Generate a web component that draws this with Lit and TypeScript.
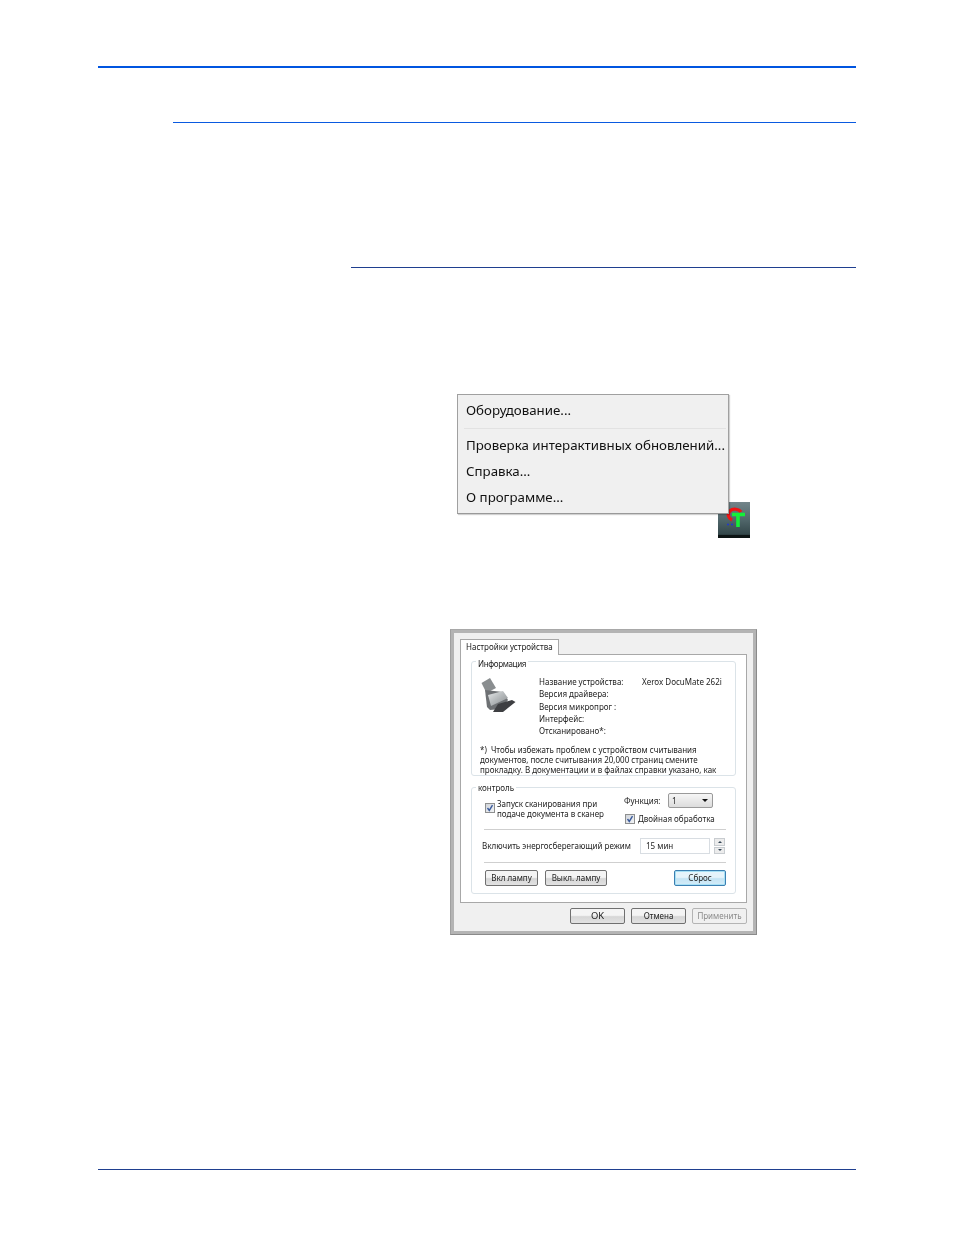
import { LitElement, html, css } from "lit";
import { customElement } from "lit/decorators.js";

@customElement("app-root")
export class AppRoot extends LitElement {
  static styles = css`
    :host { display: block; width: 954px; height: 1235px; background: #fff; overflow: hidden; font-family: "Noto Sans", sans-serif; }
    .page { display: flex; flex-direction: column; padding-top: 66px; box-sizing: border-box; height: 1235px; }
    .r1 { margin-left: 98px; width: 758px; height: 2px; background: #0055e0; }
    .r2 { margin: 54px 0 0 173px; width: 683px; height: 1px; background: #0a5ae0; }
    .r3 { margin: 144px 0 0 351px; width: 505px; height: 1px; background: #1f3f8f; }
    .r4 { margin: 234px 0 0 98px; width: 758px; height: 1px; background: #1f3f8f; }

    .menuwrap { position: relative; margin: 126px 0 0 457px; width: 293px; height: 144px; }
    .tray { position: absolute; left: 261px; top: 108px; width: 32px; height: 36px; display: block; }
    .menu { position: relative; box-sizing: border-box; width: 272px; height: 120px; background: #f0f0f0; border: 1px solid #a0a0a0; border-bottom-color: #999; box-shadow: 1px 1px 1px rgba(0,0,0,.18); display: flex; flex-direction: column; padding: 2px 0 0 8px; color: #111; font-size: 13.3px; filter: blur(.35px); }
    .mi { height: 26px; line-height: 26px; white-space: nowrap; }
    .msep { height: 1px; background: #e2e2e2; margin: 5px 2px 3px -2px; }

    .dlg { box-sizing: border-box; margin: 91px 0 0 450px; width: 307px; height: 306px; background: #f0f0f0; border: 1px solid #8a8a8a; border-top-color: #a8a8a8; border-left-color: #a0a0a0; box-shadow: inset 0 0 0 3px #b4b4b4; padding: 9px 9px 0 9px; display: flex; flex-direction: column; font-size: 8px; line-height: 10px; color: #222; filter: blur(.35px); }
    .tab { box-sizing: border-box; width: 99px; height: 16px; background: #fff; border: 1px solid #a8a8a8; border-bottom: 0; padding: 2px 0 0 5px; white-space: nowrap; margin-bottom: -1px; position: relative; z-index: 1; }
    .panel { box-sizing: border-box; height: 249px; background: #fff; border: 1px solid #a8a8a8; padding: 6px 10px 0 10px; display: flex; flex-direction: column; }
    .group { box-sizing: border-box; border: 1px solid #dbe3e8; border-radius: 3px; position: relative; }
    .legend { position: absolute; left: 4px; top: -5px; background: #fff; padding: 0 2px; height: 9px; line-height: 9px; }
    .info { height: 115px; padding: 15px 0 0 8px; flex: none; }
    .info .legend { top: -3px; letter-spacing: -.35px; }
    .inforow { display: flex; }
    .scan { width: 37px; height: 36px; margin: 0 22px 0 1px; flex: none; }
    .labels { width: 103px; flex: none; display: grid; grid-auto-rows: 12.25px; white-space: nowrap; margin-left: -1px; }
    .val { white-space: nowrap; }
    .note { margin: 7px 0 0 0; white-space: nowrap; }
    .ctrl { margin-top: 11px; height: 107px; padding: 5px 10px 0 10px; flex: none; }
    .top { display: flex; height: 36px; }
    .ck { box-sizing: border-box; width: 10px; height: 10px; background: linear-gradient(135deg,#d0d4da,#f2f4f6); border: 1px solid #8e8f8f; flex: none; color: #3a5a9c; display: block; }
    .left { display: flex; width: 142px; padding-left: 3px; box-sizing: border-box; flex: none; align-items: flex-start; padding-top: 6px; }
    .left .ck { margin: 4px 2px 0 0; }
    .right { display: flex; flex-direction: column; }
    .fn { display: flex; align-items: center; height: 15px; }
    .fn > span { width: 44px; flex: none; }
    .sel { box-sizing: border-box; width: 45px; height: 15px; border: 1px solid #9a9a9a; border-radius: 2px; background: linear-gradient(#f6f6f6,#dcdcdc); display: flex; justify-content: space-between; align-items: center; padding: 0 4px 0 3px; }
    .arr { width: 0; height: 0; border-left: 3.5px solid transparent; border-right: 3.5px solid transparent; border-top: 3.5px solid #111; }
    .dbl { display: flex; align-items: center; gap: 3px; margin-top: 6px; margin-left: 1px; }
    .sep { height: 1px; background: #cfcfcf; margin: 0 0 0 2px; width: 242px; }
    .mid { display: flex; align-items: center; height: 32px; }
    .mid .lbl { width: 158px; white-space: nowrap; flex: none; }
    .inp { box-sizing: border-box; width: 70px; height: 16px; border: 1px solid #d8dde2; padding: 2px 0 0 5px; flex: none; }
    .spin { width: 11px; height: 16px; margin-left: 4px; display: grid; grid-template-rows: 1fr 1fr; gap: 1px; flex: none; }
    .spin div { box-sizing: border-box; background: #ececec; border: 1px solid #c8ccd0; display: flex; align-items: center; justify-content: center; }
    .tu { width: 0; height: 0; border-left: 2px solid transparent; border-right: 2px solid transparent; border-bottom: 2px solid #345; }
    .td { width: 0; height: 0; border-left: 2px solid transparent; border-right: 2px solid transparent; border-top: 2px solid #345; }
    .btns { display: flex; margin-top: 7px; padding-left: 3px; }
    .btn { box-sizing: border-box; height: 16px; border: 1px solid #707070; border-radius: 2px; background: linear-gradient(#f4f4f4 45%,#d6d6d6 55%,#e2e2e2); display: flex; align-items: center; justify-content: center; white-space: nowrap; flex: none; }
    .b1 { width: 53px; }
    .b2 { width: 62px; margin-left: 7px; }
    .b3 { width: 52px; margin-left: 67px; border-color: #3c7fb1; box-shadow: inset 0 0 0 1px #a6e0f5; background: linear-gradient(#e6f4fb 45%,#c4e4f4 55%,#d4ecf8); }
    .foot { display: flex; justify-content: flex-end; gap: 6px; margin-top: 5px; }
    .f1 { width: 55px; font-size: 9.4px; }
    .f2 { width: 55px; }
    .f3 { width: 55px; border-color: #b4b4b4; background: #f0f0f0; color: #8a8a8a; }
  `;

  check() {
    return html`<svg class="ck" viewBox="0 0 8 8"><path d="M1.5 4 L3.3 6.4 L6.5 1.2" fill="none" stroke="currentColor" stroke-width="1.4"/></svg>`;
  }

  render() {
    return html`<div class="page">
      <div class="r1"></div>
      <div class="r2"></div>
      <div class="r3"></div>

      <div class="menuwrap">
        <svg class="tray" viewBox="0 0 32 36">
          <defs><linearGradient id="tg" x1="0" y1="0" x2="0" y2="1">
            <stop offset="0" stop-color="#73858a"/><stop offset=".5" stop-color="#50666a"/><stop offset=".9" stop-color="#33474a"/><stop offset=".92" stop-color="#0c1414"/><stop offset="1" stop-color="#0c1414"/>
          </linearGradient></defs>
          <rect width="32" height="36" fill="url(#tg)"/>
          <path d="M23 10 C21 7 15 6 12 9 C9 12 10 16 14 18" fill="none" stroke="#f01414" stroke-width="3.2"/>
          <path d="M14 12.5 H27 M20 12.5 V25" fill="none" stroke="#14f038" stroke-width="3.6"/>
          <path d="M9 22.5 h2 M13 22.5 h2" stroke="#2038d0" stroke-width="1.4"/>
        </svg>
        <div class="menu">
          <div class="mi">Оборудование...</div>
          <div class="msep"></div>
          <div class="mi">Проверка интерактивных обновлений...</div>
          <div class="mi">Справка...</div>
          <div class="mi">О программе...</div>
        </div>
      </div>

      <div class="dlg">
        <div class="tab">Настройки устройства</div>
        <div class="panel">
          <div class="group info">
            <span class="legend">Информация</span>
            <div class="inforow">
              <svg class="scan" viewBox="0 0 37 36">
                <defs><linearGradient id="sb" x1="0" y1="0" x2="1" y2="1">
                  <stop offset="0" stop-color="#e6e8e9"/><stop offset=".5" stop-color="#b4b8ba"/><stop offset="1" stop-color="#8a8e90"/>
                </linearGradient></defs>
                <path d="M0.5 6 L9 1 L15 11 L5.5 16 Z" fill="#8a8e90"/>
                <path d="M4 13 L6 30 L9 33 L20 32 L27 23 L22 15 Z" fill="#6d7073"/>
                <path d="M7 18 L22 14 L27 21 L10 29 Z" fill="url(#sb)"/>
                <path d="M17 27 L31 23 L34.5 25 L22 35 L12 35 Z" fill="#3e3f42"/>
              </svg>
              <div class="labels">
                <span>Название устройства:</span>
                <span>Версия драйвера:</span>
                <span>Версия микропрог :</span>
                <span>Интерфейс:</span>
                <span>Отсканировано*:</span>
              </div>
              <span class="val">Xerox DocuMate 262i</span>
            </div>
            <div class="note">*)&nbsp; Чтобы избежать проблем с устройством считывания<br>документов, после считывания 20,000 страниц смените<br>прокладку. В документации и в файлах справки указано, как</div>
          </div>
          <div class="group ctrl">
            <span class="legend">контроль</span>
            <div class="top">
              <div class="left">${this.check()}<span>Запуск сканирования при<br>подаче документа в сканер</span></div>
              <div class="right">
                <div class="fn"><span>Функция:</span><div class="sel"><span>1</span><i class="arr"></i></div></div>
                <div class="dbl">${this.check()}<span>Двойная обработка</span></div>
              </div>
            </div>
            <div class="sep"></div>
            <div class="mid">
              <span class="lbl">Включить энергосберегающий режим</span>
              <div class="inp">15 мин</div>
              <div class="spin"><div><i class="tu"></i></div><div><i class="td"></i></div></div>
            </div>
            <div class="sep"></div>
            <div class="btns">
              <div class="btn b1">Вкл лампу</div>
              <div class="btn b2">Выкл. лампу</div>
              <div class="btn b3">Сброс</div>
            </div>
          </div>
        </div>
        <div class="foot">
          <div class="btn f1">OK</div>
          <div class="btn f2">Отмена</div>
          <div class="btn f3">Применить</div>
        </div>
      </div>

      <div class="r4"></div>
    </div>`;
  }
}
